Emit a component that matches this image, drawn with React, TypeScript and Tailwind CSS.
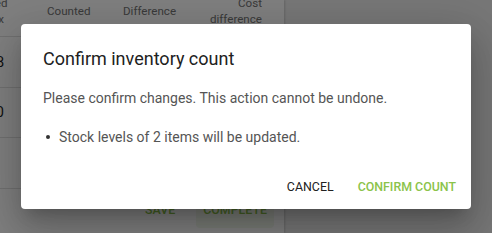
import React from "react";

const font = { fontFamily: "Roboto, 'Liberation Sans', sans-serif" };

function TableBehind() {
  return (
    <div className="flex h-[233px] w-[492px]">
      <div className="relative flex w-[284px] flex-col overflow-hidden bg-white shadow-[1px_0_2px_rgba(0,0,0,0.15)]">
        <div className="flex h-[37px] items-start border-b border-[#e0e0e0]">
          <div className="-mt-[5px] flex h-[32px] items-center text-[11.6px] leading-[16px] text-[#757575]">
            <div className="-ml-[40px] w-[44px] shrink-0 text-right">
              <div>Expected</div>
              <div>Qty box</div>
            </div>
            <div className="ml-[43px] w-[76px] shrink-0">Counted</div>
            <div className="w-[60px] shrink-0">Difference</div>
            <div className="w-[79px] shrink-0 text-right">
              <div>Cost</div>
              <div>difference</div>
            </div>
          </div>
        </div>
        <div className="flex h-[51px] items-center border-b border-[#e0e0e0] text-[14px] text-[#212121]">
          <div className="-ml-[40px] w-[44px] text-right">128</div>
        </div>
        <div className="flex h-[50px] items-center border-b border-[#e0e0e0] text-[14px] text-[#212121]">
          <div className="-ml-[40px] w-[44px] text-right">40</div>
        </div>
        <div className="h-[51px] border-b border-[#e0e0e0]" />
        <div className="flex items-start gap-[13px] pl-[137px] pt-[3px]">
          <div className="flex h-[36px] items-center px-[8px] text-[12.4px] font-medium text-[#8bc34a]">
            SAVE
          </div>
          <div className="flex h-[36px] items-center rounded-[4px] bg-[#f3f8ec] px-[7px] text-[12.4px] font-medium text-[#8bc34a]">
            COMPLETE
          </div>
        </div>
      </div>
      <div className="flex-1 bg-[#eeeeee]" />
    </div>
  );
}

function ConfirmDialog() {
  return (
    <div className="w-[450px] rounded-[4px] bg-white shadow-[0_11px_15px_-7px_rgba(0,0,0,0.2),0_24px_38px_3px_rgba(0,0,0,0.14),0_9px_46px_8px_rgba(0,0,0,0.12)]">
      <h2 className="px-[22px] pt-[21px] text-[18px] font-normal leading-[28px] text-[#212121]">
        Confirm inventory count
      </h2>
      <div className="px-[22px] pt-[13px] text-[14px] leading-[24px] text-[#555555]">
        <p>Please confirm changes. This action cannot be undone.</p>
        <ul className="mt-[15px]">
          <li className="flex items-center">
            <span className="ml-[3px] mr-[9px] h-[4px] w-[4px] rounded-full bg-[#333333]" />
            Stock levels of 2 items will be updated.
          </li>
        </ul>
      </div>
      <div className="flex justify-end gap-[8px] pb-[10px] pr-[7px] pt-[26px]">
        <button
          type="button"
          className="px-[8px] text-[12.4px] font-normal leading-[24px] text-[#212121]"
        >
          CANCEL
        </button>
        <button
          type="button"
          className="px-[8px] text-[12.4px] font-medium leading-[24px] text-[#8bc34a]"
        >
          CONFIRM COUNT
        </button>
      </div>
    </div>
  );
}

export default function App() {
  return (
    <div className="relative h-[233px] w-[492px] overflow-hidden" style={font}>
      <TableBehind />
      <div className="absolute inset-0 flex items-center justify-center bg-black/50">
        <ConfirmDialog />
      </div>
    </div>
  );
}
